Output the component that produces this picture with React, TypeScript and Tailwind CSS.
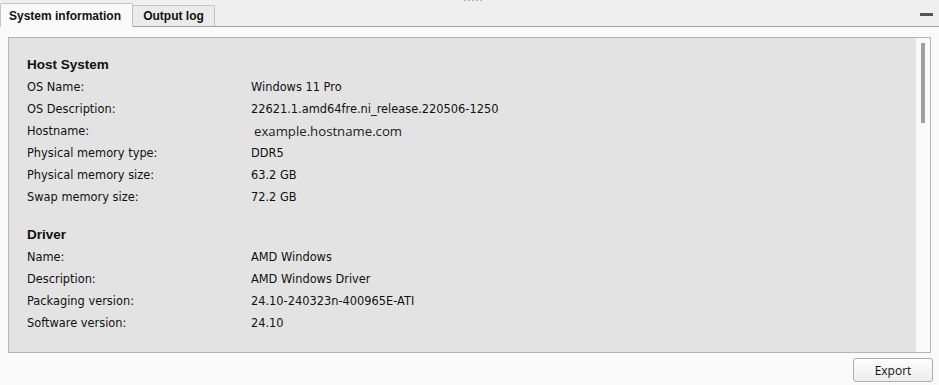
import React from "react";

const host: [string, string, boolean?][] = [
  ["OS Name:", "Windows 11 Pro"],
  ["OS Description:", "22621.1.amd64fre.ni_release.220506-1250"],
  ["Hostname:", "example.hostname.com", true],
  ["Physical memory type:", "DDR5"],
  ["Physical memory size:", "63.2 GB"],
  ["Swap memory size:", "72.2 GB"],
];

const driver: [string, string, boolean?][] = [
  ["Name:", "AMD Windows"],
  ["Description:", "AMD Windows Driver"],
  ["Packaging version:", "24.10-240323n-400965E-ATI"],
  ["Software version:", "24.10"],
];

function Section({ title, rows }: { title: string; rows: [string, string, boolean?][] }) {
  return (
    <div className="flex flex-col">
      <div className="h-[22px] leading-[22px] text-[13.5px] font-bold text-[#111]">{title}</div>
      {rows.map(([k, v, alt]) => (
        <div key={k} className="flex h-[22px] pt-[2px] items-center text-[11.4px] text-[#111] [font-family:'DejaVu_Sans',sans-serif]">
          <div className="w-[224px] shrink-0">{k}</div>
          {alt ? (
            <div className="pl-[3px] text-[13.2px] text-[#222] [font-family:'Open_Sans',sans-serif]">{v}</div>
          ) : (
            <div>{v}</div>
          )}
        </div>
      ))}
    </div>
  );
}

export default function App() {
  return (
    <div className="w-[939px] h-[385px] bg-[#fafafa] flex flex-col overflow-hidden [font-family:'Liberation_Sans',Arial,sans-serif]">
      {/* top tab bar */}
      <div className="relative h-[27px] shrink-0 bg-[#efefef] border-b border-[#a0a0a0] flex items-end">
        <div className="absolute left-[464px] top-0 flex gap-[2px]">
          {[0, 1, 2, 3, 4].map((i) => (
            <div key={i} className="w-[2px] h-[1px] bg-[#b0b0b0]" />
          ))}
        </div>
        <div className="relative z-10 -mb-px h-[24px] w-[133px] bg-[#fafafa] border border-b-0 border-[#c4c4c4] rounded-t-[2px] flex items-center pl-[8px] text-[12px] font-bold text-[#111]">
          System information
        </div>
        <div className="h-[21px] w-[82px] bg-[#ebebeb] border border-b-0 border-l-0 border-[#c4c4c4] rounded-tr-[2px] flex items-center justify-center text-[12px] font-bold text-[#111]">
          Output log
        </div>
        <div className="flex-1" />
        <div className="self-start mt-[13px] mr-[6px] w-[13px] h-[3px] bg-[#555]" />
      </div>

      {/* panel */}
      <div className="mx-[8px] mt-[10px] h-[316px] shrink-0 border border-[#b4b4b4] bg-[#e3e3e3] flex">
        <div className="flex-1 pl-[18px] pt-[16px] flex flex-col gap-[16px]">
          <Section title="Host System" rows={host} />
          <Section title="Driver" rows={driver} />
        </div>
        <div className="w-[14px] bg-[#fafafa] flex justify-center pt-[5px]">
          <div className="w-[4px] h-[80px] bg-[#a0a0a0]" />
        </div>
      </div>

      {/* footer */}
      <div className="flex justify-end pr-[6px] pt-[5px]">
        <button className="w-[80px] h-[24px] pt-[1px] rounded-[3px] border border-[#acacac] bg-gradient-to-b from-[#fdfdfd] to-[#ededed] text-[12px] text-[#111] [font-family:'Open_Sans',sans-serif] leading-none">
          Export
        </button>
      </div>
    </div>
  );
}
